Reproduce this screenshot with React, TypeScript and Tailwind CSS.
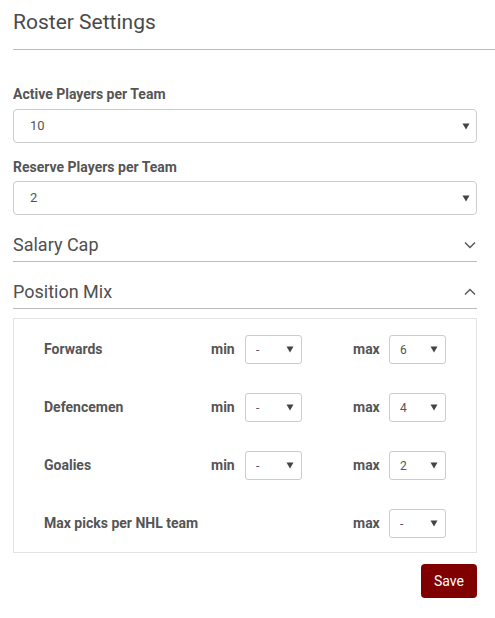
import React from "react";

function Arrow() {
  return (
    <svg width="8" height="7" viewBox="0 0 8 7" className="shrink-0">
      <path d="M0.5 0.5 H7.5 L4 6.5 Z" fill="#444" />
    </svg>
  );
}

function BigSelect({ value }: { value: string }) {
  return (
    <div className="flex h-[34px] items-center justify-between rounded-[4px] border border-[#cccccc] bg-white pl-[16px] pr-[6px] text-[13px] text-[#555]">
      <span>{value}</span>
      <Arrow />
    </div>
  );
}

function SmallSelect({ value }: { value: string }) {
  return (
    <div className="flex h-[29px] w-[57px] items-center justify-between rounded-[3px] border border-[#cccccc] bg-white pl-[10px] pr-[7px] text-[12px] text-[#555]">
      <span>{value}</span>
      <Arrow />
    </div>
  );
}

function Row({ label, min, max }: { label: string; min?: string; max: string }) {
  return (
    <div className="flex items-center">
      <div className="w-[167px] text-[14px] font-bold text-[#555]">{label}</div>
      {min !== undefined ? (
        <>
          <div className="w-[34px] text-[14px] font-bold text-[#555]">min</div>
          <SmallSelect value={min} />
        </>
      ) : (
        <div className="w-[91px]" />
      )}
      <div className="w-[51px]" />
      <div className="w-[36px] text-[14px] font-bold text-[#555]">max</div>
      <SmallSelect value={max} />
    </div>
  );
}

export default function App() {
  return (
    <div className="min-h-[618px] w-[495px] bg-white pl-[13px] text-[#555]" style={{ fontFamily: "Roboto, 'Noto Sans', sans-serif" }}>
      <div className="border-b border-[#bbbbbb] pb-[14px] pt-[10px]">
        <h1 className="text-[21px] font-normal leading-[25px] text-[#4a4a4a]">Roster Settings</h1>
      </div>
      <div className="pr-[18px]">
        <div className="mt-[35px] text-[14px] font-bold leading-[18px]">Active Players per Team</div>
        <div className="mt-[6px]">
          <BigSelect value="10" />
        </div>
        <div className="mt-[15px] text-[14px] font-bold leading-[18px]">Reserve Players per Team</div>
        <div className="mt-[5px]">
          <BigSelect value="2" />
        </div>

        <div className="mt-[18px] flex items-center justify-between border-b border-[#bbbbbb] pb-[4px]">
          <span className="text-[18px] leading-[24px] text-[#4f4f4f]">Salary Cap</span>
          <svg width="12" height="8" viewBox="0 0 12 8" className="mr-[1px]">
            <path d="M1 1.5 L6 6.5 L11 1.5" fill="none" stroke="#555" strokeWidth="1.4" />
          </svg>
        </div>
        <div className="mt-[18px] flex items-center justify-between border-b border-[#bbbbbb] pb-[4px]">
          <span className="text-[18px] leading-[24px] text-[#4f4f4f]">Position Mix</span>
          <svg width="12" height="8" viewBox="0 0 12 8" className="mr-[1px]">
            <path d="M1 6.5 L6 1.5 L11 6.5" fill="none" stroke="#555" strokeWidth="1.4" />
          </svg>
        </div>

        <div className="mt-[9px] flex flex-col gap-[29px] border border-[#e3e3e3] pb-[14px] pl-[30px] pt-[16px]">
          <Row label="Forwards" min="-" max="6" />
          <Row label="Defencemen" min="-" max="4" />
          <Row label="Goalies" min="-" max="2" />
          <Row label="Max picks per NHL team" max="-" />
        </div>

        <div className="mt-[11px] flex justify-end">
          <button className="h-[34px] w-[56px] rounded-[4px] bg-[#800000] text-[14px] text-white">Save</button>
        </div>
      </div>
    </div>
  );
}
